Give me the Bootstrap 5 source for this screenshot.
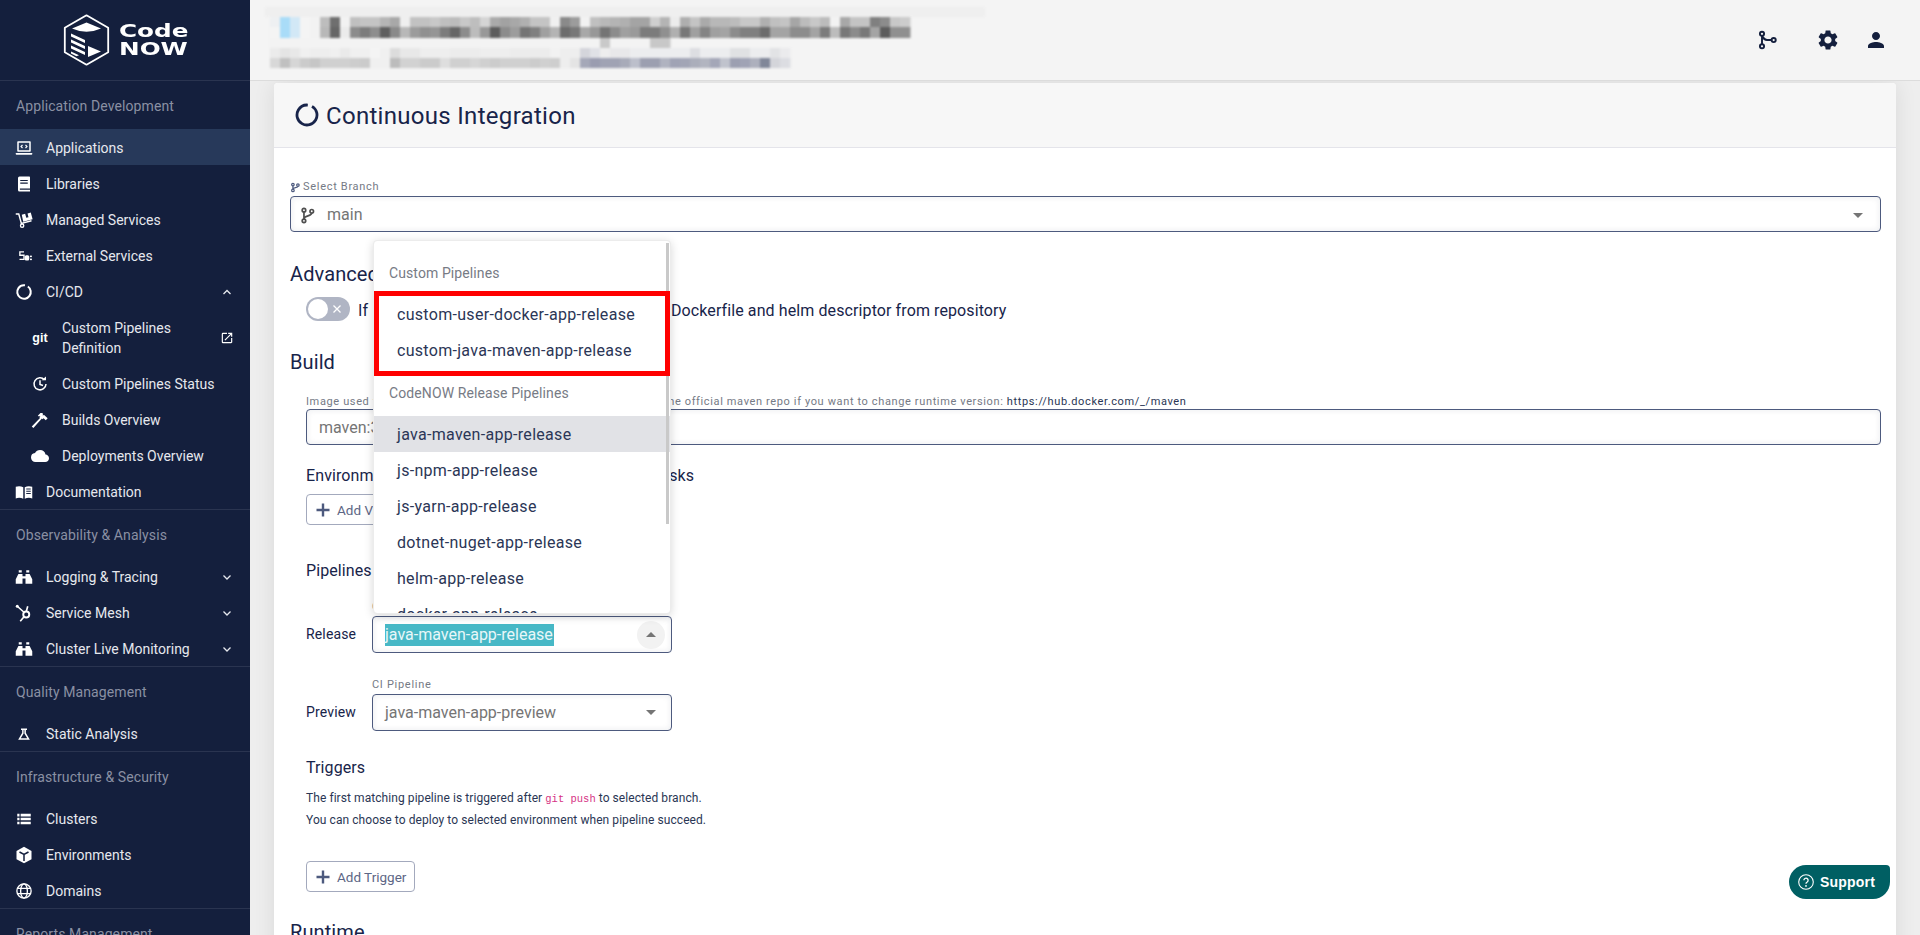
<!doctype html>
<html lang="en"><head><meta charset="utf-8"><title>Continuous Integration</title>
<link href="https://cdn.jsdelivr.net/npm/bootstrap@5.3.0/dist/css/bootstrap.min.css" rel="stylesheet">
<style>
html,body{height:935px;overflow:hidden}
body{font-family:Roboto,"Liberation Sans",sans-serif;font-size:14px;color:#18244a;background:#eeeeee}
.side{width:250px;background:#141f3d;color:#e6e8ee;flex:none;height:935px;overflow:hidden}
.side-top{height:81px;border-bottom:1px solid #2a3450}
.logo-txt{font-family:"DejaVu Sans",sans-serif;font-weight:700;color:#fff;width:68px;margin-left:9px}
.logo-txt span{display:block;font-size:17px;line-height:17px;transform-origin:left center;white-space:nowrap}
.logo-a{transform:scaleX(1.45)}
.logo-b{transform:scaleX(1.37);font-size:18px!important}
.grp{border-bottom:1px solid #2a3450}
.grp-t{height:48px;line-height:50px;padding-left:16px;color:#8a90a3;font-size:14px;letter-spacing:.1px}
.it{height:36px;padding:2px 17px 0 15px;color:#e6e8ee}
.it.on{background:#27395a}
.it.sub{padding-left:31px}
.it.tall{height:56px;line-height:20px}
.ico{width:18px;height:18px;flex:none;margin-right:13px;fill:#fff;color:#fff}
.chev{width:12px;height:12px;margin-left:auto;margin-right:0;flex:none}
.gittag{width:18px;margin-right:13px;font-weight:700;font-size:12.5px;color:#fff;flex:none;text-align:center;font-family:"Liberation Sans",sans-serif}
.top{height:81px;background:#f4f4f4;border-bottom:1px solid #dcdcdc;padding-right:32px}
.blur{width:730px;height:80px;margin-left:15px;filter:blur(.8px)}
.tico{width:24px;height:24px;fill:#141f3d}
.gap-tops{gap:24px}
.wrap{padding:2px 24px 0;height:854px;overflow:hidden}
.shell{border:0;border-radius:4px;height:1000px;box-shadow:0 0 22px rgba(0,0,0,.09);--bs-card-bg:#fff}
.shell>.card-header{height:65px;background:#f7f7f7;border-bottom:1px solid #e4e4ea;padding:0 0 0 21px;font-size:24px;color:#18244a;letter-spacing:.3px;border-radius:4px 4px 0 0}
.title-txt{padding-top:1px}
.ring{width:24px;height:24px;margin-right:7px;flex:none}
.body{padding:33px 15px 0 16px}
.lbl{height:12px;line-height:16px;font-size:11px;color:#757a85;letter-spacing:.7px;white-space:nowrap}
.lbl.long{letter-spacing:.63px}
.lbl.plain{line-height:12px}
.lbl b{font-weight:400;color:#2a3654}
.lbl-hide{display:inline-block;width:358px;overflow:hidden;vertical-align:bottom}
.fld{height:36px;margin-top:3px;border:1px solid #4d5a7e;border-radius:4px;padding:2px 12px 0;font-size:16px;color:#757575;box-shadow:inset 0 0 6px rgba(20,31,61,.09);background:#fff;white-space:nowrap}
.caret{width:0;height:0;border-left:5px solid transparent;border-right:5px solid transparent;border-top:5px solid #757575;flex:none}
.caret.up{border-top:0;border-bottom:5px solid #757575}
.h-a{font-size:20px;line-height:26px;height:24px;margin:0;font-weight:400;color:#18244a;letter-spacing:.1px}
.h-b{font-size:16px;line-height:24px;height:24px;margin:0;font-weight:400;color:#18244a;letter-spacing:.1px;white-space:nowrap}
.h-hide{display:inline-block;width:349px;overflow:hidden;vertical-align:bottom;white-space:nowrap}
.ind{margin-left:16px}
.tog{width:44px;height:24px;border-radius:12px;background:#b0b5c4;flex:none;padding:2px;margin-right:8px}
.tog i{display:block;width:20px;height:20px;background:#fff;border-radius:50%}
.tog svg{width:12px;height:12px;margin-left:3px}
.tog-text{font-size:16px;line-height:27px;height:24px;white-space:nowrap;letter-spacing:.1px}
.tog-hide{display:inline-block;width:313px}
.addb{height:31px;padding:1px 8px 0 8px;border:1px solid #a3a9bd;border-radius:4px;font-size:13.5px;color:#5d6685;background:#fff;--bs-btn-hover-bg:#fff}
.addb svg{width:16px;height:16px;fill:#4d5a7e;margin-right:6px}
.sel-col{width:300px;margin-left:0}
.row-lbl{width:66px;flex:none;font-size:14px;line-height:37px;height:37px;letter-spacing:.15px}
.fld.s37{height:37px;padding-top:0}
.pick{background:#47b8c6;color:#e9f7f9;line-height:22px;padding-right:1px}
.rnd{width:28px;height:28px;border-radius:50%;background:#f2f2f2;margin-right:-6px}
.note{font-size:12px;line-height:21px;margin:0;color:#2a3654;letter-spacing:.07px;white-space:nowrap}
.note code{font-family:"Liberation Mono",monospace;font-size:10.5px;color:#d63384;letter-spacing:0}
.menu{left:99px;top:157px;width:298px;height:374px;overflow:hidden;padding:0;border:1px solid #ececec;border-radius:4px;box-shadow:0 2px 10px rgba(0,0,0,.16);z-index:5;margin:0}
.menu-h{height:36px;line-height:36px;margin-top:14px;padding:0 0 0 15px;font-size:14px;color:#777b85;letter-spacing:.1px}
.menu-h2{height:40px;line-height:34px;margin-top:0;padding:0 0 0 15px;font-size:14px;color:#777b85;letter-spacing:.1px}
.menu .dropdown-item{height:36px;line-height:38px;padding:0 0 0 23px;font-size:16px;color:#2b3656;letter-spacing:.3px}
.menu .dropdown-item.cur{background:#e1e2e6}
.redbox{border:5px solid #f00;height:85px;width:296px;position:relative;z-index:1;background:#fff}
.redbox .dropdown-item{padding-left:18px}
.sb{right:1px;top:2px;width:3px;height:281px;background:#c9c9c9}
.support{right:30px;bottom:36px;height:34px;width:101px;background:#005f63;color:#fff;border-radius:17px 4px 17px 17px;font-family:"Liberation Sans",sans-serif;font-weight:700;font-size:14px;padding-left:9px;z-index:9;letter-spacing:.2px}
.support svg{width:16px;height:16px;margin-right:6px}
.rel{position:relative}
</style></head>
<body>
<div class="d-flex">
<aside class="side">
  <div class="side-top d-flex align-items-center justify-content-center">
    <svg width="47" height="52" viewBox="0 0 47 52" fill="#fff" aria-label="CodeNOW">
      <path d="M23.5 1.3L45.2 13.8V38.2L23.5 50.7L1.8 38.2V13.8Z" fill="none" stroke="#fff" stroke-width="1.8" stroke-linejoin="round"/>
      <path d="M9 14.5L23.5 8.5L38 14.5Q23.5 21 9 14.5Z"/>
      <path d="M8 19.5L22 26v3L8 22.5zM8 25.5L22 32v3L8 28.5zM8 31.5L22 38v3L8 34.5zM8 37.5l8 3.7-2.5 1L8 39.5z"/>
      <path d="M25 32L38 37.5L25 43Z"/>
    </svg>
    <div class="logo-txt"><span class="logo-a">Code</span><span class="logo-b">NOW</span></div>
  </div>

  <div class="grp">
    <div class="grp-t">Application Development</div>
    <nav class="nav flex-column">
      <div class="it on d-flex align-items-center"><svg class="ico" viewBox="0 0 24 24"><path d="M4 3h16a1 1 0 0 1 1 1v12a1 1 0 0 1-1 1H4a1 1 0 0 1-1-1V4a1 1 0 0 1 1-1zm1 2v10h14V5zM1 18.5h22V20a1 1 0 0 1-1 1H2a1 1 0 0 1-1-1z"/><path d="M10 8l-2 2 2 2M14 8l2 2-2 2" fill="none" stroke="#fff" stroke-width="1.5"/></svg>Applications</div>
      <div class="it d-flex align-items-center"><svg class="ico" viewBox="0 0 24 24"><path d="M6 2h13a1 1 0 0 1 1 1v19H6a2 2 0 0 1-2-2V4a2 2 0 0 1 2-2z"/><path d="M7 6.5h10v1.6H7zM7 10h10v1.6H7zM6.500 18H20v1.600H6.500z" fill="#141f3d"/></svg>Libraries</div>
      <div class="it d-flex align-items-center"><svg class="ico" viewBox="0 0 24 24"><path d="M1 4h4l3.500 12.500L22 13" fill="none" stroke="#fff" stroke-width="1.900"/><circle cx="9.500" cy="19.500" r="2.200" fill="none" stroke="#fff" stroke-width="1.800"/><path d="M9 5l4.500-1.200L15 9l3-.8-1.300-5L21 2l2.500 9L11 14.300z"/></svg>Managed Services</div>
      <div class="it d-flex align-items-center"><svg class="ico" viewBox="0 0 24 24"><path d="M11 5.500H5.500V10H11v5.500H5" fill="none" stroke="#fff" stroke-width="1.800" transform="translate(1 1)"/><rect x="13" y="11" width="6" height="7" rx="2"/><rect x="20" y="11.500" width="2.500" height="2"/><rect x="20" y="15.500" width="2.500" height="2"/></svg>External Services</div>
      <div class="it d-flex align-items-center"><svg class="ico" viewBox="0 0 24 24"><circle cx="12" cy="12" r="9" fill="none" stroke="#fff" stroke-width="2.700" stroke-dasharray="52 4.500" transform="rotate(-55 12 12)"/></svg>CI/CD<svg class="chev" viewBox="0 0 12 12"><path d="M2.500 8L6 4.500 9.500 8" fill="none" stroke="#e6e8ee" stroke-width="1.300"/></svg></div>
      <div class="it sub tall d-flex align-items-center"><span class="gittag">git</span><span>Custom Pipelines<br>Definition</span><svg class="chev" style="width:14px;height:14px;margin-right:-1px" viewBox="0 0 24 24" fill="#fff"><path d="M19 19H5V5h7V3H5a2 2 0 0 0-2 2v14a2 2 0 0 0 2 2h14c1.100 0 2-.9 2-2v-7h-2v7zM14 3v2h3.590l-9.830 9.830 1.410 1.410L19 6.410V10h2V3h-7z"/></svg></div>
      <div class="it sub d-flex align-items-center"><svg class="ico" viewBox="0 0 24 24"><path d="M18 6.500A8 8 0 1 0 20 12" fill="none" stroke="#fff" stroke-width="2"/><path d="M12 7v5.500l4 1.500" fill="none" stroke="#fff" stroke-width="2"/><path d="M14 7h6V2z"/></svg>Custom Pipelines Status</div>
      <div class="it sub d-flex align-items-center"><svg class="ico" viewBox="0 0 24 24"><path d="M1 20.500L12 9.200l-.8-.8 1.400-1.400h-2.800l-.7-.7L12.600 2.800h2.500l.7.700v2.800l1.400-1.400 5 4.800-2.500 2.600-3-2.800-1.400 1.400-.8-.8L3.200 22.700z"/></svg>Builds Overview</div>
      <div class="it sub d-flex align-items-center"><svg class="ico" viewBox="0 0 24 24"><path d="M19.350 10.040A7.490 7.490 0 0 0 12 4C9.110 4 6.600 5.640 5.350 8.040A5.994 5.994 0 0 0 0 14c0 3.310 2.690 6 6 6h13c2.760 0 5-2.240 5-5 0-2.640-2.050-4.780-4.650-4.960z"/></svg>Deployments Overview</div>
      <div class="it d-flex align-items-center"><svg class="ico" viewBox="0 0 24 24"><path d="M1 5c3-1 7-1 10 .5V21c-3-1.500-7-1.500-10-.5zM13 5.500C16 4 20 4 23 5v15.500c-3-1-7-1-10 .5z"/><path d="M15 8h6M15 11h6M15 14h6" stroke="#141f3d" stroke-width="1.300"/></svg>Documentation</div>
    </nav>
  </div>

  <div class="grp">
    <div class="grp-t">Observability &amp; Analysis</div>
    <div class="it d-flex align-items-center"><svg class="ico" viewBox="0 0 24 24"><path d="M5 3h4v3H5zM15 3h4v3h-4zM4.500 8H10v3h4V8h5.500L23 15v6h-9v-7h-4v7H1v-6z"/></svg>Logging &amp; Tracing<svg class="chev" viewBox="0 0 12 12"><path d="M2.500 4.500L6 8l3.500-3.500" fill="none" stroke="#e6e8ee" stroke-width="1.300"/></svg></div>
    <div class="it d-flex align-items-center"><svg class="ico" viewBox="0 0 24 24"><circle cx="15" cy="14" r="4" fill="none" stroke="#fff" stroke-width="2.600"/><path d="M3 3l9 8M17 3l-2 7M12 17l-5 6" fill="none" stroke="#fff" stroke-width="2.200"/><circle cx="3" cy="3" r="2"/></svg>Service Mesh<svg class="chev" viewBox="0 0 12 12"><path d="M2.500 4.500L6 8l3.500-3.500" fill="none" stroke="#e6e8ee" stroke-width="1.300"/></svg></div>
    <div class="it d-flex align-items-center"><svg class="ico" viewBox="0 0 24 24"><path d="M5 3h4v3H5zM15 3h4v3h-4zM4.500 8H10v3h4V8h5.500L23 15v6h-9v-7h-4v7H1v-6z"/></svg>Cluster Live Monitoring<svg class="chev" viewBox="0 0 12 12"><path d="M2.500 4.500L6 8l3.500-3.500" fill="none" stroke="#e6e8ee" stroke-width="1.300"/></svg></div>
  </div>

  <div class="grp">
    <div class="grp-t">Quality Management</div>
    <div class="it d-flex align-items-center"><svg class="ico" viewBox="0 0 24 24"><path d="M8 5.500h8M10.500 5.500v5.500L6 18.500h12L13.500 11V5.500" fill="none" stroke="#fff" stroke-width="2"/></svg>Static Analysis</div>
  </div>

  <div class="grp">
    <div class="grp-t">Infrastructure &amp; Security</div>
    <div class="it d-flex align-items-center"><svg class="ico" viewBox="0 0 24 24"><path d="M3 5h3v3.500H3zM7.500 5H21v3.500H7.500zM3 10.300h3v3.500H3zM7.500 10.300H21v3.500H7.500zM3 15.600h3v3.500H3zM7.500 15.600H21v3.500H7.500z"/></svg>Clusters</div>
    <div class="it d-flex align-items-center"><svg class="ico" viewBox="0 0 24 24"><path d="M12 1l10 5.500v11L12 23 2 17.500v-11z"/><path d="M6 8l6 3.300L18 8M12 11.300V20" fill="none" stroke="#141f3d" stroke-width="2"/></svg>Environments</div>
    <div class="it d-flex align-items-center"><svg class="ico" viewBox="0 0 24 24"><g fill="none" stroke="#fff" stroke-width="1.800"><circle cx="12" cy="12" r="9.500"/><ellipse cx="12" cy="12" rx="4.500" ry="9.500"/><path d="M3 8.500h18M3 15.500h18"/></g></svg>Domains</div>
  </div>
  <div class="grp-t">Reports Management</div>
</aside>

<div class="flex-grow-1" style="min-width:0">
  <header class="top d-flex align-items-center justify-content-between">
    <svg class="blur" id="blurred" viewBox="265 0 730 80" aria-hidden="true"></svg>
    <div class="d-flex align-items-center gap-tops">
      <svg class="tico" style="width:20px;height:20px;margin-right:15px" viewBox="0 0 24 24"><g fill="none" stroke="#141f3d" stroke-width="2.300"><circle cx="6" cy="4.500" r="2.500"/><circle cx="6" cy="19.500" r="2.500"/><circle cx="20" cy="12" r="2.500"/><path d="M6 7v10M7 8c1 3 3 4 5 4h5.500"/></g></svg>
      <svg class="tico" viewBox="0 0 24 24"><path d="M19.140 12.940c.04-.3.06-.61.06-.94 0-.32-.02-.64-.07-.94l2.030-1.580a.49.49 0 0 0 .12-.61l-1.920-3.320a.488.488 0 0 0-.59-.22l-2.390.96c-.5-.38-1.030-.7-1.620-.94l-.36-2.540a.484.484 0 0 0-.48-.41h-3.840c-.24 0-.43.17-.47.41l-.36 2.540c-.59.24-1.130.57-1.620.94l-2.390-.96c-.22-.08-.47 0-.59.22L2.740 8.870c-.12.21-.08.47.12.61l2.030 1.580c-.05.3-.09.63-.09.94s.02.64.07.94l-2.030 1.580a.49.49 0 0 0-.12.61l1.920 3.320c.12.22.37.29.59.22l2.390-.96c.5.38 1.030.7 1.620.94l.36 2.540c.05.24.24.41.48.41h3.840c.24 0 .44-.17.47-.41l.36-2.540c.59-.24 1.130-.56 1.620-.94l2.390.96c.22.08.47 0 .59-.22l1.920-3.320c.12-.22.07-.47-.12-.61l-2.010-1.580zM12 15.600c-1.980 0-3.600-1.620-3.600-3.600s1.620-3.600 3.600-3.600 3.600 1.620 3.600 3.600-1.620 3.600-3.600 3.600z"/></svg>
      <svg class="tico" viewBox="0 0 24 24"><path d="M12 12c2.210 0 4-1.790 4-4s-1.790-4-4-4-4 1.790-4 4 1.790 4 4 4zm0 2c-2.670 0-8 1.340-8 4v2h16v-2c0-2.660-5.330-4-8-4z"/></svg>
    </div>
  </header>

  <main class="wrap">
    <section class="card shell rel">
      <div class="card-header d-flex align-items-center">
        <svg class="ring" viewBox="0 0 24 24"><circle cx="12" cy="12" r="10" fill="none" stroke="#18244a" stroke-width="2.800" stroke-dasharray="58 4.800" transform="rotate(-60 12 12)"/></svg>
        <span class="title-txt">Continuous Integration</span>
      </div>

      <div class="body">
        <div class="lbl d-flex align-items-center"><svg width="10" height="11" viewBox="0 0 24 24" style="margin-right:3px"><g fill="none" stroke="#4d5a7e" stroke-width="3"><circle cx="7" cy="5" r="3"/><circle cx="7" cy="19" r="3"/><circle cx="19" cy="6" r="3"/><path d="M7 8v8M19 9c0 4-12 3-12 7"/></g></svg>Select Branch</div>
        <div class="fld d-flex align-items-center">
          <svg width="17" height="17" viewBox="0 0 24 24" style="margin-left:-4px;margin-right:11px"><g fill="none" stroke="#4f4f4f" stroke-width="2.400"><circle cx="7" cy="4.500" r="2.500"/><circle cx="7" cy="19.500" r="2.500"/><circle cx="18" cy="6" r="2.500"/><path d="M7 7v10M18 8.500c0 5-11 3-11 8.500"/></g></svg>
          main<span class="caret ms-auto" style="margin-right:5px"></span>
        </div>

        <h2 class="h-a" style="margin-top:29px">Advanced</h2>
        <div class="ind d-flex align-items-center" style="margin-top:12px">
          <div class="tog d-flex align-items-center"><i></i><svg viewBox="0 0 12 12"><path d="M2.500 2.500l7 7M9.500 2.500l-7 7" stroke="#fff" stroke-width="1.300"/></svg></div>
          <span class="tog-text"><span class="tog-hide">If</span>Dockerfile and helm descriptor from repository</span>
        </div>

        <h2 class="h-a" style="margin-top:28px">Build</h2>
        <div class="ind">
          <div class="lbl long" style="margin-top:21px"><span class="lbl-hide">Image used for build</span>the official maven repo if you want to change runtime version: <b>https://hub.docker.com/_/maven</b></div>
          <div class="fld d-flex align-items-center">maven:3-jdk-11</div>

          <h3 class="h-b" style="margin-top:19px"><span class="h-hide">Environment variables available in</span>tasks</h3>
          <button class="btn addb d-inline-flex align-items-center" style="margin-top:6px" type="button"><svg viewBox="0 0 16 16"><path d="M6.800 1.500h2.400v5.300h5.300v2.400H9.200v5.300H6.800V9.200H1.500V6.800h5.300z"/></svg>Add Value</button>

          <h3 class="h-b" style="margin-top:34px">Pipelines</h3>
          <div class="d-flex align-items-end" style="margin-top:18px">
            <div class="row-lbl">Release</div>
            <div class="sel-col">
              <div class="lbl plain">CI Pipeline</div>
              <div class="fld s37 d-flex align-items-center"><span class="pick">java-maven-app-release</span><span class="rnd ms-auto d-flex align-items-center justify-content-center"><span class="caret up"></span></span></div>
            </div>
          </div>
          <div class="d-flex align-items-end" style="margin-top:26px">
            <div class="row-lbl">Preview</div>
            <div class="sel-col">
              <div class="lbl plain">CI Pipeline</div>
              <div class="fld s37 d-flex align-items-center">java-maven-app-preview<span class="caret ms-auto" style="margin-right:3px"></span></div>
            </div>
          </div>

          <h3 class="h-b" style="margin-top:25px">Triggers</h3>
          <p class="note" style="margin-top:8px">The first matching pipeline is triggered after <code>git push</code> to selected branch.</p>
          <p class="note">You can choose to deploy to selected environment when pipeline succeed.</p>
          <button class="btn addb d-inline-flex align-items-center" style="margin-top:30px" type="button"><svg viewBox="0 0 16 16"><path d="M6.800 1.500h2.400v5.300h5.300v2.400H9.200v5.300H6.800V9.200H1.500V6.800h5.300z"/></svg>Add Trigger</button>
        </div>
        <h2 class="h-a" style="margin-top:27px">Runtime</h2>
      </div>

      <div class="dropdown-menu show menu position-absolute">
        <div class="menu-h">Custom Pipelines</div>
        <div class="redbox">
          <a class="dropdown-item" href="#">custom-user-docker-app-release</a>
          <a class="dropdown-item" href="#">custom-java-maven-app-release</a>
        </div>
        <div class="menu-h2">CodeNOW Release Pipelines</div>
        <a class="dropdown-item cur" href="#">java-maven-app-release</a>
        <a class="dropdown-item" href="#">js-npm-app-release</a>
        <a class="dropdown-item" href="#">js-yarn-app-release</a>
        <a class="dropdown-item" href="#">dotnet-nuget-app-release</a>
        <a class="dropdown-item" href="#">helm-app-release</a>
        <a class="dropdown-item" href="#">docker-app-release</a>
        <div class="sb position-absolute"></div>
      </div>
    </section>
  </main>
</div>
</div>

<div class="support position-fixed d-flex align-items-center"><svg viewBox="0 0 16 16"><circle cx="8" cy="8" r="7.300" fill="none" stroke="#fff" stroke-width="1.100"/><path d="M5.900 6.300a2.100 2.100 0 1 1 3.300 1.700c-.8.500-1.200.9-1.200 1.800" fill="none" stroke="#fff" stroke-width="1.300"/><circle cx="8" cy="11.900" r=".9" fill="#fff"/></svg>Support</div>

<script src="https://cdn.jsdelivr.net/npm/bootstrap@5.3.0/dist/js/bootstrap.bundle.min.js"></script>
<script>
(function(){
var rows=[
[17,10,"eef0f2 a9dcf8 d2e8f6 f4f4f4 f2f2f2 bdbdbd 6f6f6f f2f2f2 c0c0c0 c4c4c4 c4c4c4 b5b5b5 a8a8a8 efefef c2c2c2 c2c2c2 c8c8c8 bfbfbf bcbcbc c8c8c8 bebebe d5d5d5 aaaaaa a2a2a2 a8a8a8 b0b0b0 c4c4c4 c4c4c4 f0f0f0 8a8a8a 9c9c9c f2f2f2 c0c0c0 b8b8b8 b4b4b4 b0b0b0 a4a4a4 a4a4a4 cfcfcf b4b4b4 ececec aeaeae c4c4c4 aaaaaa b8b8b8 b8b8b8 bcbcbc c8c8c8 c8c8c8 b0b0b0 c0c0c0 c4c4c4 a6a6a6 bcbcbc c8c8c8 bcbcbc f2f2f2 a8a8a8 c4c4c4 c4c4c4 808080 8c8c8c c8c8c8 cccccc"],
[27,11,"f4f4f4 a9dcf8 d2e8f6 f4f4f4 f2f2f2 b8b8b8 666666 ebebeb 8c8c8c 7c7c7c 8e8e8e 5e5e5e 8a8a8a b8b8b8 9c9c9c 909090 959595 7c7c7c 666666 8c8c8c bcbcbc 989898 5c5c5c 8c8c8c 9c9c9c 747474 808080 a0a0a0 b4b4b4 6c6c6c 787878 a8a8a8 989898 747474 8c8c8c a0a0a0 9a9a9a 7c7c7c 7c7c7c 909090 b0b0b0 787878 a0a0a0 848484 a0a0a0 a4a4a4 8c8c8c 808080 808080 6c6c6c a4a4a4 a4a4a4 8c8c8c 8c8c8c a4a4a4 7c7c7c bcbcbc 787878 8c8c8c 787878 a4a4a4 5c5c5c 909090 909090"],
[38,10,"f3f3f3 f3f3f3 f3f3f3 f3f3f3 f3f3f3 f3f3f3 f3f3f3 f3f3f3 f3f3f3 f3f3f3 f3f3f3 f3f3f3 f3f3f3 f3f3f3 f3f3f3 f3f3f3 f3f3f3 f3f3f3 f3f3f3 f3f3f3 f3f3f3 f3f3f3 f3f3f3 f3f3f3 f3f3f3 f3f3f3 f3f3f3 f3f3f3 f3f3f3 f3f3f3 f3f3f3 f3f3f3 f3f3f3 c9c9c9 f3f3f3 f3f3f3 f3f3f3 f3f3f3 c8c8c8 c8c8c8"],
[48,10,"ebebeb e4e4e4 e8e8e8 f0f0f0 eeeeee eeeeee f0f0f0 eaeaea f0f0f0 f0f0f0 f4f4f4 f0f0f0 dcdcdc e8e8e8 e8e8e8 eeeeee eeeeee eeeeee ececec ececec ececec eeeeee eeeeee eeeeee ececec ececec ececec ececec f2f2f2 eeeeee eeeeee d4d5db e0e1e6 eeeeee e8e8ea e8e8ea ecedef ecedef ecedef ecedef ecedef ecedef dddee2 ecedef ecedef ecedef e0e1e3 e0e1e3 ecedef ecedef e2e3e5 ebebed"],
[58,10,"d8d8d8 c0c0c0 d6d6d6 cbcbcb c6c6c6 d0d0d0 d0d0d0 d0d0d0 cdcdcd cbcbcb f0f0f0 f0f0f0 bcbcbc d2d2d2 d2d2d2 cbcbcb cbcbcb dedede d0d0d0 d0d0d0 d6d6d6 d0d0d0 cccccc d0d0d0 d0d0d0 d0d0d0 cccccc d0d0d0 cecece eeeeee e4e4e4 a5a8b8 9a9cb0 a0a3b4 a0a3b4 a8abb9 bcbfcb 9c9fb0 9c9fb0 b0b3c0 a0a3b5 a2a5b6 abaebb b2b5c0 a4a7b8 c0c3cd 9c9fb1 a0a3b5 adb0bd 808799 d4d5da dcdde2"]];
var s='<rect x="265" y="7" width="720" height="10" fill="#efefef"/>';
rows.forEach(function(r){r[2].split(" ").forEach(function(c,k){s+='<rect x="'+(270+k*10)+'" y="'+r[0]+'" width="10.500" height="'+r[1]+'" fill="#'+c+'"/>';});});
document.getElementById("blurred").innerHTML=s;
})();
</script>
</body></html>
